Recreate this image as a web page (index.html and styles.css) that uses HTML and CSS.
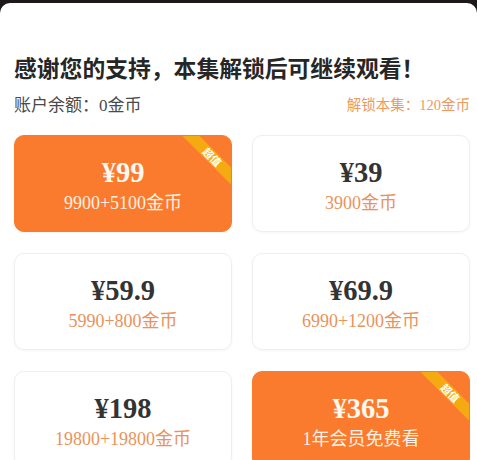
FILE: index.html
```html
<!DOCTYPE html>
<html lang="zh">
<head>
<meta charset="utf-8">
<link rel="stylesheet" href="styles.css">
</head>
<body>
<div class="sheet">
  <h1 class="title">感谢您的支持，本集解锁后可继续观看！</h1>
  <div class="info">
    <span class="balance">账户余额：0金币</span>
    <span class="cost">解锁本集：120金币</span>
  </div>
  <div class="grid">
    <div class="card hot">
      <div class="ribbon">超值</div>
      <div class="price">¥99</div>
      <div class="sub">9900+5100金币</div>
    </div>
    <div class="card">
      <div class="price">¥39</div>
      <div class="sub">3900金币</div>
    </div>
    <div class="card">
      <div class="price">¥59.9</div>
      <div class="sub">5990+800金币</div>
    </div>
    <div class="card">
      <div class="price">¥69.9</div>
      <div class="sub">6990+1200金币</div>
    </div>
    <div class="card">
      <div class="price">¥198</div>
      <div class="sub">19800+19800金币</div>
    </div>
    <div class="card hot">
      <div class="ribbon">超值</div>
      <div class="price">¥365</div>
      <div class="sub">1年会员免费看</div>
    </div>
  </div>
</div>
</body>
</html>
```
FILE: styles.css
```css
html, body {
  margin: 0;
  padding: 0;
  background: #1c1719;
  height: 460px;
  overflow: hidden;
}
.sheet {
  margin-top: 3px;
  background: #fff;
  border-radius: 10px 10px 0 0;
  padding: 50px 7px 0 14px;
  height: 460px;
  box-sizing: border-box;
}
.title {
  margin: 0;
  font-family: "Noto Sans CJK SC", sans-serif;
  font-weight: 700;
  font-size: 22.8px;
  line-height: 30px;
  color: #262626;
  letter-spacing: 0;
}
.info {
  margin-top: 9px;
  display: flex;
  justify-content: space-between;
  align-items: center;
  height: 22px;
}
.balance {
  font-family: "Liberation Serif", "Noto Sans CJK SC", serif;
  font-size: 17px;
  color: #4a4a4a;
}
.cost {
  font-family: "Liberation Serif", "Noto Sans CJK SC", serif;
  font-size: 14.5px;
  color: #ec9a60;
}
.grid {
  margin-top: 21px;
  display: grid;
  grid-template-columns: 218px 218px;
  grid-auto-rows: 97px;
  column-gap: 20px;
  row-gap: 21px;
}
.card {
  position: relative;
  overflow: hidden;
  border-radius: 10px;
  border: 1px solid #efefef;
  box-shadow: 0 1px 3px rgba(0,0,0,0.04);
  background: #fff;
  box-sizing: border-box;
  display: flex;
  flex-direction: column;
  align-items: center;
  padding-top: 21px;
}
.price {
  font-family: "Liberation Serif", "Noto Sans CJK SC", serif;
  font-weight: 700;
  font-size: 28.5px;
  line-height: 32px;
  color: #333;
}
.sub {
  margin-top: 2px;
  font-family: "Liberation Serif", "Noto Sans CJK SC", serif;
  font-size: 18px;
  line-height: 24px;
  color: #e9935b;
}
.card.hot {
  background: #fa7b2e;
  border-color: #fa7b2e;
}
.card.hot .price {
  color: #fff8f0;
}
.card.hot .sub {
  color: #fff1e6;
}
.ribbon {
  position: absolute;
  left: 157px;
  top: 15px;
  width: 80px;
  height: 12px;
  transform: rotate(45deg);
  background: #f5aa12;
  color: #fff;
  font-family: "Noto Sans CJK SC", sans-serif;
  font-weight: 700;
  font-size: 10.5px;
  line-height: 12px;
  text-align: center;
}
```
